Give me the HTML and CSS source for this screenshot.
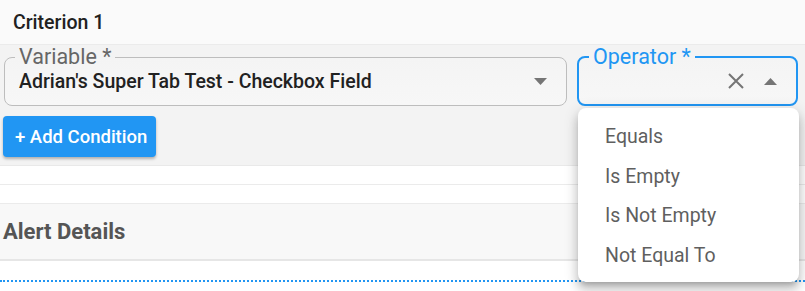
FILE: index.html
```html
<!DOCTYPE html>
<html lang="en">
<head>
    <meta charset="UTF-8">
    <title>Criterion</title>
    <link rel="stylesheet" href="styles.css">
</head>
<body>

<div class="criterion">
    <div class="criterion-header">Criterion 1</div>
    <div class="criterion-body">
        <div class="field-row">
            <fieldset class="field">
                <legend>Variable *</legend>
                <div class="field-content">
                    <span class="field-value">Adrian's Super Tab Test - Checkbox Field</span>
                    <svg class="caret" width="13" height="7" viewBox="0 0 13 7"><path d="M0 0h13L6.5 7z" fill="#757575"/></svg>
                </div>
            </fieldset>
            <fieldset class="field field-focused">
                <legend>Operator *</legend>
                <div class="field-content field-content-end">
                    <svg class="clear" width="16" height="16" viewBox="0 0 16 16"><path d="M1 1L15 15M15 1L1 15" stroke="#757575" stroke-width="2"/></svg>
                    <svg class="caret" width="13" height="7" viewBox="0 0 13 7"><path d="M0 7h13L6.5 0z" fill="#757575"/></svg>
                </div>
            </fieldset>
        </div>
        <button class="add-btn">+ Add Condition</button>
    </div>
</div>

<div class="spacer-row"></div>
<div class="spacer-row"></div>

<div class="section-title">Alert Details</div>
<div class="section-body">
    <div class="dotted"></div>
</div>

<ul class="menu">
    <li>Equals</li>
    <li>Is Empty</li>
    <li>Is Not Empty</li>
    <li>Not Equal To</li>
</ul>

</body>
</html>
```

FILE: styles.css
```css
body {
    margin: 0;
    height: 291px;
    background: #ffffff;
    font-family: Roboto, "Liberation Sans", sans-serif;
    position: relative;
    overflow: hidden;
}

.criterion-header {
    height: 44px;
    display: flex;
    align-items: center;
    padding-left: 13px;
    background: #fafafa;
    border-bottom: 1px solid #ebebeb;
    font-size: 19.5px;
    font-weight: 500;
    color: #212121;
}

.criterion-body {
    background: #f3f3f3;
    padding: 2px 7px 8px 3px;
    border-bottom: 1px solid #e9e9e9;
}

.field-row {
    display: flex;
    gap: 10px;
    padding-left: 1px;
}

.field {
    flex: 1;
    margin: 0;
    padding: 0 10px 10px 14px;
    border: 1px solid #bdbdbd;
    border-radius: 8px;
    background: linear-gradient(#f4f4f4, #f7f7f7);
    min-width: 0;
}

.field legend {
    font-size: 21.5px;
    line-height: 20px;
    padding: 0 4px;
    margin-left: -4px;
    color: #666666;
}

.field-focused {
    flex: none;
    width: 221px;
    box-sizing: border-box;
    border: 2px solid #2196f3;
    padding: 0 19px 9px 14px;
}

.field-focused legend {
    color: #2196f3;
}

.field-content {
    height: 28px;
    display: flex;
    align-items: center;
    justify-content: space-between;
}

.field-content-end {
    justify-content: flex-end;
    gap: 20px;
}

.field-value {
    font-size: 19.5px;
    font-weight: 500;
    color: #212121;
}

.caret {
    margin-right: 9px;
}

.field-content-end .caret {
    margin-right: 0;
}

.add-btn {
    margin-top: 10px;
    width: 153px;
    height: 41px;
    padding: 0 0 0 12px;
    text-align: left;
    border: none;
    border-radius: 4px;
    background: #2196f3;
    color: #ffffff;
    font-family: Roboto, "Liberation Sans", sans-serif;
    font-size: 18.5px;
    font-weight: 500;
    box-shadow: 0 2px 3px rgba(0, 0, 0, 0.28);
}

.spacer-row {
    height: 18px;
    border-bottom: 1px solid #ebebeb;
}

.section-title {
    height: 55px;
    display: flex;
    align-items: center;
    padding-left: 3px;
    background: #f8f8f8;
    border-bottom: 2px solid #e6e6e6;
    font-size: 22px;
    font-weight: 700;
    color: #555555;
}

.section-body {
    padding-top: 19px;
}

.dotted {
    border-top: 2px dotted #2196f3;
}

.menu {
    position: absolute;
    left: 578px;
    top: 108px;
    width: 221px;
    margin: 0;
    padding: 9px 0 7px;
    list-style: none;
    background: #ffffff;
    border-radius: 8px;
    box-shadow: 0 5px 5px -3px rgba(0, 0, 0, 0.2), 0 8px 10px 1px rgba(0, 0, 0, 0.14), 0 3px 14px 2px rgba(0, 0, 0, 0.12);
}

.menu li {
    height: 39.5px;
    display: flex;
    align-items: center;
    padding-left: 27px;
    font-size: 19.5px;
    color: #5f5f5f;
}
```
